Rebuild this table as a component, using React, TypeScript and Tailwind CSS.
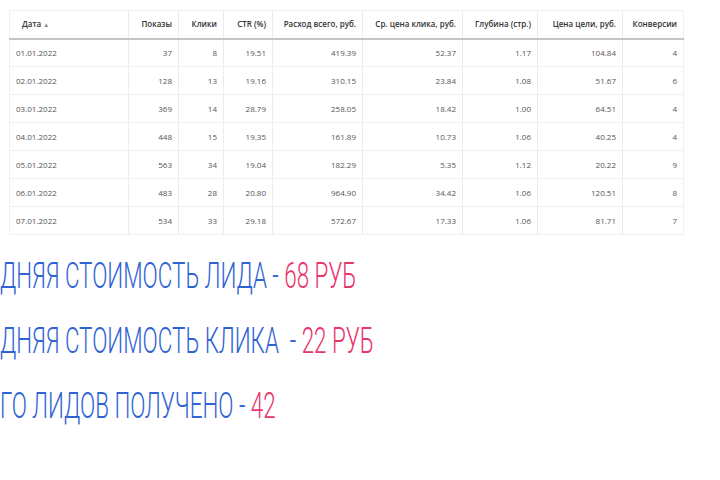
const rows = [
  ["01.01.2022", "37", "8", "19.51", "419.39", "52.37", "1.17", "104.84", "4"],
  ["02.01.2022", "128", "13", "19.16", "310.15", "23.84", "1.08", "51.67", "6"],
  ["03.01.2022", "369", "14", "28.79", "258.05", "18.42", "1.00", "64.51", "4"],
  ["04.01.2022", "448", "15", "19.35", "161.89", "10.73", "1.06", "40.25", "4"],
  ["05.01.2022", "563", "34", "19.04", "182.29", "5.35", "1.12", "20.22", "9"],
  ["06.01.2022", "483", "28", "20.80", "964.90", "34.42", "1.06", "120.51", "8"],
  ["07.01.2022", "534", "33", "29.18", "572.67", "17.33", "1.06", "81.71", "7"],
];

const headers = [
  "Показы",
  "Клики",
  "CTR (%)",
  "Расход всего, руб.",
  "Ср. цена клика, руб.",
  "Глубина (стр.)",
  "Цена цели, руб.",
  "Конверсии",
];

const widths = [
  "w-[119px]",
  "w-[50px]",
  "w-[45px]",
  "w-[49px]",
  "w-[90px]",
  "w-[100px]",
  "w-[75px]",
  "w-[85px]",
  "w-[61px]",
];

const Summary = ({ label, value }: { label: string; value: string }) => (
  <div className="h-[65px] flex items-center overflow-visible">
    <div className="origin-left scale-x-[0.605] whitespace-pre text-[37px] leading-none font-light uppercase [font-family:Roboto,sans-serif]">
      <span className="text-[#2f63d3]">{label} - </span>
      <span className="text-[#e8356a]">{value}</span>
    </div>
  </div>
);

export default function App() {
  return (
    <div className="w-[720px] h-[480px] bg-white overflow-hidden [font-family:'Open_Sans',sans-serif]">
      <div className="pt-[10px] pl-[9px]">
        {/* stats table */}
        <table className="border-collapse table-fixed w-[674px] text-[8px] border border-[#f0f0f0]">
          <colgroup>
            {widths.map((w, i) => (
              <col key={i} className={w} />
            ))}
          </colgroup>
          <thead>
            <tr className="h-[28px] border-b-2 border-[#c4c4c4]">
              <th className="text-left font-semibold text-[#333] pl-[12px] pr-[6px] border-r border-[#ececec]">
                Дата <span className="text-[6px] text-[#888]">▲</span>
              </th>
              {headers.map((h, i) => (
                <th
                  key={i}
                  className="text-right font-semibold text-[#333] px-[6px] border-r border-[#ececec] last:border-r-0 whitespace-nowrap"
                >
                  {h}
                </th>
              ))}
            </tr>
          </thead>
          <tbody>
            {rows.map((r, i) => (
              <tr key={i} className="h-[28px] border-b border-[#efefef] last:border-b-0">
                {r.map((c, j) => (
                  <td
                    key={j}
                    className={`px-[6px] text-[#555] border-r border-[#ececec] last:border-r-0 ${
                      j === 0 ? "text-left" : "text-right"
                    }`}
                  >
                    {c}
                  </td>
                ))}
              </tr>
            ))}
          </tbody>
        </table>
      </div>
      {/* summary lines, cut off on the left */}
      <div className="mt-[8px]">
        <Summary label="ДНЯЯ СТОИМОСТЬ ЛИДА" value="68 РУБ" />
        <Summary label="ДНЯЯ СТОИМОСТЬ КЛИКА " value="22 РУБ" />
        <Summary label="ГО ЛИДОВ ПОЛУЧЕНО" value="42" />
      </div>
    </div>
  );
}
